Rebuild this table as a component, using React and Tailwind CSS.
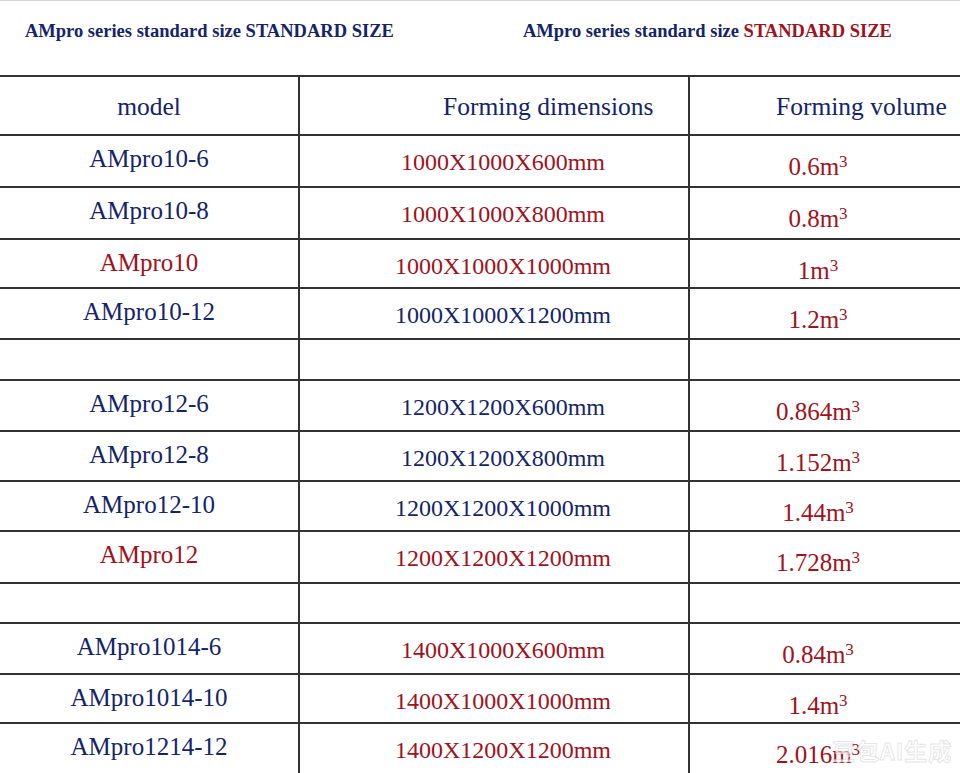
const NAVY = 'text-[#15246a]';
const RED = 'text-[#a0121d]';

const rows = [
  { h: 'h-[52px]', model: 'AMpro10-6', mc: NAVY, dim: '1000X1000X600mm', dc: RED, vol: '0.6' },
  { h: 'h-[52px]', model: 'AMpro10-8', mc: NAVY, dim: '1000X1000X800mm', dc: RED, vol: '0.8' },
  { h: 'h-[49px]', model: 'AMpro10', mc: RED, dim: '1000X1000X1000mm', dc: RED, vol: '1' },
  { h: 'h-[51px]', model: 'AMpro10-12', mc: NAVY, dim: '1000X1000X1200mm', dc: NAVY, vol: '1.2' },
  { h: 'h-[41px]', empty: true },
  { h: 'h-[51px]', model: 'AMpro12-6', mc: NAVY, dim: '1200X1200X600mm', dc: NAVY, vol: '0.864' },
  { h: 'h-[50px]', model: 'AMpro12-8', mc: NAVY, dim: '1200X1200X800mm', dc: NAVY, vol: '1.152' },
  { h: 'h-[50px]', model: 'AMpro12-10', mc: NAVY, dim: '1200X1200X1000mm', dc: NAVY, vol: '1.44' },
  { h: 'h-[52px]', model: 'AMpro12', mc: RED, dim: '1200X1200X1200mm', dc: RED, vol: '1.728' },
  { h: 'h-[40px]', empty: true },
  { h: 'h-[51px]', model: 'AMpro1014-6', mc: NAVY, dim: '1400X1000X600mm', dc: RED, vol: '0.84' },
  { h: 'h-[49px]', model: 'AMpro1014-10', mc: NAVY, dim: '1400X1000X1000mm', dc: RED, vol: '1.4' },
  { h: 'h-[60px]', model: 'AMpro1214-12', mc: NAVY, dim: '1400X1200X1200mm', dc: RED, vol: '2.016' },
];

function Row({ row }) {
  return (
    <div className={`flex border-t-2 border-[#333] ${row.h}`}>
      <div className={`w-[300px] border-r-2 border-[#333] pt-[9px] text-center ${row.mc}`}>
        {row.model}
      </div>
      <div className={`w-[390px] border-r-2 border-[#333] pt-[12px] pl-[18px] text-center text-[24px] ${row.dc}`}>
        {row.dim}
      </div>
      <div className={`flex-1 pt-[17px] pr-[14px] text-center ${RED}`}>
        {!row.empty && (
          <span>
            {row.vol}m
            <span className="relative -top-[8px] text-[17px] leading-none">3</span>
          </span>
        )}
      </div>
    </div>
  );
}

export default function App() {
  return (
    <div
      className="relative w-[960px] h-[773px] overflow-hidden bg-white border-t border-[#d4d4d4]"
      style={{ fontFamily: '"Liberation Serif", "Times New Roman", serif' }}
    >
      {/* titles */}
      <div className="flex h-[74px] pt-[20px] text-[18.5px] leading-[20px] font-bold">
        <div className={`pl-[25px] w-[523px] ${NAVY}`}>AMpro series standard size STANDARD SIZE</div>
        <div className={NAVY}>
          AMpro series standard size <span className={RED}>STANDARD SIZE</span>
        </div>
      </div>

      <div className="text-[25px] leading-[28px]">
        {/* header */}
        <div className={`flex h-[59px] border-t-2 border-[#333] text-[25.5px] ${NAVY}`}>
          <div className="w-[300px] border-r-2 border-[#333] pt-[16px] text-center">model</div>
          <div className="w-[390px] border-r-2 border-[#333] pt-[16px] pl-[143px]">Forming dimensions</div>
          <div className="flex-1 pt-[16px] pl-[86px]">Forming volume</div>
        </div>
        {rows.map((row, i) => (
          <Row key={i} row={row} />
        ))}
      </div>

      {/* watermark */}
      <div
        className="absolute left-[832px] top-[734px] text-[23px] leading-[30px] font-bold text-white/70 tracking-[1px] pointer-events-none"
        style={{ fontFamily: '"Noto Sans CJK SC", sans-serif', WebkitTextStroke: '1px rgba(180,180,180,0.35)' }}
      >
        豆包AI生成
      </div>
    </div>
  );
}
